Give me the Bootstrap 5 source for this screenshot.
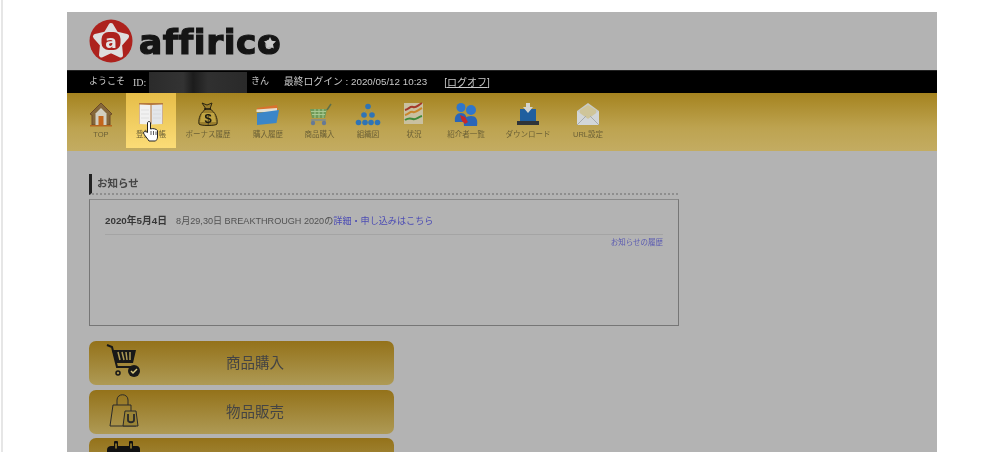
<!DOCTYPE html>
<html lang="ja">
<head>
<meta charset="utf-8">
<title>affirico</title>
<link href="https://cdn.jsdelivr.net/npm/bootstrap@5.3.0/dist/css/bootstrap.min.css" rel="stylesheet">
<style>
html,body{height:452px;overflow:hidden;background:#fff}
body{font-family:"Liberation Sans","Noto Sans CJK JP",sans-serif;border-left:2px solid #e6e6e6;margin-left:1px}
.sheet{width:870px;height:440px;margin:12px 0 0 64px;background:#b3b3b3;overflow:hidden;filter:blur(.6px)}
.logo-band{height:58px;padding-left:22px;gap:6px}
.logo-word{font-family:"DejaVu Sans",sans-serif;font-weight:700;font-size:34.500px;line-height:1;color:#151515;-webkit-text-stroke:1.2px #151515;letter-spacing:.5px;margin-top:3px;position:relative}
.logo-star{position:absolute;right:5px;top:12px}
.user-bar{height:23px;background:#000;color:#c8c8c8;font-size:9px;padding-left:22px;border-top:1px solid #222}
.greet{margin-right:8px}
.id-tag{font-family:"Liberation Serif",serif;font-size:10px;width:16px}
.mask-id{width:98px;height:21px;margin-right:4px;background:linear-gradient(90deg,#2b2b2b,#333 35%,#1c1c1c 45%,#303030 60%,#2a2a2a)}
.last-login{margin-left:15px;font-size:9.800px}
.user-bar a{color:#c8c8c8;margin-left:17px;font-size:10px}
.menu{height:58px;background:linear-gradient(#a5831f,#bda350 60%,#c3ac62);padding-left:9px;position:relative}
.menu-item{height:55px;color:#6b6036;font-size:7.500px;text-align:center;padding-top:9px;flex:none;white-space:nowrap}
.menu-item svg{display:block;margin:0 auto 1px;width:26px;height:26px}
.menu-item.lit{background:linear-gradient(#e6bd48,#fbdc77)}
.w-a{width:50px}.w-b{width:64px}.w-c{width:56px}.w-d{width:47px}.w-f{width:42px}.w-g{width:62px}.w-h{width:58px}
.menu-hand{position:absolute;left:76px;top:27px}
.pane{padding:23px 0 0 22px}
.head-line{width:589px;height:21px;border-left:3px solid #222;border-bottom:2px dotted #8e8e8e;font-size:10.500px;font-weight:700;color:#444;padding-left:5px;line-height:18px;box-sizing:border-box}
.news-box{width:590px;height:127px;margin-top:4px;border:1px solid #767676;border-top-color:#8a8a8a;padding:13px 15px 0 15px}
.news-row{height:22px;border-bottom:1px solid #a4a4a4;font-size:9.100px;color:#515151;line-height:15px}
.news-row b{color:#383838;margin-right:9px;font-size:9.800px}
.news-row a{color:#4c4cb4;text-decoration:none}
.news-more a{color:#5a5ab2;text-decoration:none}
.news-more{font-size:7.500px;text-align:right;line-height:15px}
.big-btn{width:305px;height:44px;margin-bottom:4.500px;border-radius:7px;background:linear-gradient(#94721a,#ae9a55);color:#444;font-size:14.500px;position:relative;padding:2px 0 0 27px}
.big-btn svg{position:absolute;left:16px;top:3px}
.stack{margin-top:15px}
</style>
</head>
<body>
<div class="sheet">
  <div class="logo-band d-flex align-items-center">
    <svg width="44" height="44" viewBox="0 0 44 44">
      <circle cx="22" cy="22" r="21.500" fill="#ad221d"/>
      <path d="M22 6.500l5 8.500 10.500 2.500-7 8 1 10.500L22 31.500l-9.500 4.500 1-10.500-7-8L17 15z" fill="#dedede" stroke="#dedede" stroke-width="5" stroke-linejoin="round"/>
      <rect x="12.500" y="13" width="19" height="18" rx="7" fill="#ad221d"/>
      <text x="22" y="28.500" text-anchor="middle" font-family="DejaVu Sans" font-weight="700" font-size="17" fill="#e4e4e4">a</text>
    </svg>
    <div class="logo-word">affirico
      <svg class="logo-star" width="12" height="12" viewBox="0 0 12 12"><path d="M6 0l1.800 3.800 4.200.5-3 2.900.8 4.300L6 9.400 2.200 11.500l.8-4.300-3-2.900 4.200-.5z" fill="#c8c8c8"/></svg>
    </div>
  </div>
  <div class="user-bar d-flex align-items-center">
    <span class="greet">ようこそ</span><span class="id-tag">ID:</span><span class="mask-id"></span><span>きん</span>
    <span class="last-login">最終ログイン : 2020/05/12 10:23</span><a href="#">[ログオフ]</a>
  </div>
  <div class="menu d-flex">
    <div class="menu-item w-a">
      <svg viewBox="0 0 26 26"><path d="M13 1 2 12l2 1v10h18V13l2-1z" fill="#85673a" stroke="#6b4a28"/><path d="M7.500 11.500 13 6l5.500 5.500V23h-11z" fill="#d2cfc0"/><path d="M10.500 14h5v9h-5z" fill="#c4661c"/><path d="M2 23h22v1.500H2z" fill="#b5661f"/></svg>TOP
    </div>
    <div class="menu-item w-a lit">
      <svg viewBox="0 0 26 26"><path d="M1 1h24v21H1z" fill="#b5793d"/><path d="M1.500 2.500 12.500 3v19.500L1.500 22z" fill="#f1f1f1"/><path d="M13.500 3l11-.5V22l-11 .5z" fill="#e3e6ea"/><path d="M3 8h8M3 12h8M3 16h8M15 8h8M15 12h8M15 16h8" stroke="#d4d4d4" stroke-width=".6"/></svg>登録台帳
    </div>
    <div class="menu-item w-b">
      <svg viewBox="0 0 26 26"><path d="M7 1l5 2 5-2-2 6c5 3 8 9 7 15-1 2-17 2-18 0-1-6 2-12 7-15z" fill="#9a7e2c" stroke="#2d2610"/><path d="M9 7h7" stroke="#1c1a10" stroke-width="1.500"/><path d="M7 11h12l2 9H5z" fill="#c0a442"/><text x="13" y="20.500" text-anchor="middle" font-family="Liberation Sans" font-weight="700" font-size="13" fill="#1c1a10">$</text></svg>ボーナス履歴
    </div>
    <div class="menu-item w-c">
      <svg viewBox="0 0 26 26"><path d="M2 6l20-3 1 5H2z" fill="#d8722e"/><path d="M1.500 7.500 22 6v4H1.500z" fill="#e6e0d0"/><path d="M2 11l22-3-2.500 13L2 23z" fill="#3c86c8"/></svg>購入履歴
    </div>
    <div class="menu-item w-d">
      <svg viewBox="0 0 26 26"><path d="M3 7h17l-2 9H5z" fill="#6f9a58"/><path d="M4 9.500h15M5 12.500h13M8 7v9M12 7v9M16 7v9" stroke="#a8c890"/><path d="M20 8l4-6" stroke="#5d6f4a" stroke-width="1.500"/><path d="M4 18h15" stroke="#8a8f80" stroke-width="2"/><circle cx="6" cy="21" r="2.200" fill="#667a96"/><circle cx="17" cy="21" r="2.200" fill="#667a96"/></svg>商品購入
    </div>
    <div class="menu-item w-a">
      <svg viewBox="0 0 26 26" fill="#2f74b6"><path d="M13 4 8 12M13 4l5 8" stroke="#9c9868"/><circle cx="13" cy="4.500" r="2.800"/><circle cx="9" cy="13" r="2.800"/><circle cx="17" cy="13" r="2.800"/><circle cx="3.500" cy="20.500" r="2.800"/><circle cx="10" cy="20.500" r="2.800"/><circle cx="16" cy="20.500" r="2.800"/><circle cx="22.500" cy="20.500" r="2.800"/></svg>組織図
    </div>
    <div class="menu-item w-f">
      <svg viewBox="0 0 26 26" fill="none" stroke-width="2"><path d="M3 1h19v21H3z" fill="#c9c0a0" stroke="none"/><path d="M4 8c4-1 5-4 8-3s4-1 9-4" stroke="#a5382a"/><path d="M4 13c4-1 5-4 8-3s5-2 9-4" stroke="#c9862a"/><path d="M4 18c3-2 5-2 8-1s5-2 9-3" stroke="#3f8a3a"/></svg>状況
    </div>
    <div class="menu-item w-g">
      <svg viewBox="0 0 26 26"><circle cx="8" cy="5.500" r="4.500" fill="#2f76cc"/><circle cx="18" cy="8" r="5" fill="#2f76cc"/><path d="M2 20c-1-6 2-9 6-9s6 3 6 9z" fill="#2a66b8"/><path d="M11 24c-1-7 2-10 7-10s7 3 6 10z" fill="#2a66b8"/><path d="M7 13l5 2 3 5-3 2-3-3z" fill="#c8282a"/></svg>紹介者一覧
    </div>
    <div class="menu-item w-g">
      <svg viewBox="0 0 26 26"><path d="M5 7h16v13H5z" fill="#205f9f"/><path d="M2 19h22v4H2z" fill="#2f3439"/><path d="M11 1h4v4h3l-5 6-5-6h3z" fill="#d5d5d0"/></svg>ダウンロード
    </div>
    <div class="menu-item w-h">
      <svg viewBox="0 0 26 26"><path d="M2 9 13 1l11 8v14H2z" fill="#c8cbc8"/><path d="M5 8l8-5 8 5v5l-8 4-8-4z" fill="#cfc59a"/><path d="M2 9l11 8 11-8v14H2z" fill="#d2d6d8"/><path d="M2 23l9-9M24 23l-9-9" stroke="#a6aaac"/></svg>URL設定
    </div>
    <svg class="menu-hand" width="16" height="22" viewBox="0 0 16 22"><path d="M4.500 3c0-2 3-2 3 0v6c2-1 6 0 7 1.500V17c0 2-1 3-2 4H6c-1-2-5-6-5.500-8-.3-1.500 2-2 4-.5z" fill="#fff" stroke="#222"/><path d="M8 11v4M10.500 11v4M13 11.500V15" stroke="#333" stroke-width=".8"/></svg>
  </div>
  <div class="pane">
    <div class="head-line">お知らせ</div>
    <div class="news-box">
      <div class="news-row"><b>2020年5月4日</b>8月29,30日 BREAKTHROUGH 2020の<a href="#">詳細・申し込みはこちら</a></div>
      <div class="news-more"><a href="#">お知らせの履歴</a></div>
    </div>
    <div class="stack">
      <div class="big-btn d-flex align-items-center justify-content-center">
        <svg width="36" height="34" viewBox="0 0 36 34" fill="none"><path d="M2 1l5 2 5 20h15" stroke="#181818" stroke-width="2"/><path d="M7 6h24l-3 13H11z" fill="#181818"/><path d="M13 8l2 8M17 8l2 8M21 8l1 8M25 8v8" stroke="#ae9a55" stroke-width="1.500"/><circle cx="13" cy="29" r="2" stroke="#181818" stroke-width="1.500"/><circle cx="29" cy="27" r="6" fill="#181818"/><path d="M26 27l2 2 4-4" stroke="#d8c880" stroke-width="1.500"/></svg>
        商品購入
      </div>
      <div class="big-btn d-flex align-items-center justify-content-center">
        <svg width="36" height="34" viewBox="0 0 36 34" fill="none" stroke="#2a2a2a" stroke-width="1"><path d="M8 12 5 33h26M8 12h18v6M12 12V7c0-7 11-7 11 0v5"/><path d="M20 18h11l2 15H18z" fill="#9a8436"/><path d="M23 21v6c0 3 6 3 6 0v-6" stroke-width="1.800"/></svg>
        物品販売
      </div>
      <div class="big-btn d-flex align-items-center justify-content-center">
        <svg width="36" height="34" viewBox="0 0 36 34"><path d="M2 9c0-3 2-4 4-4h26c2 0 3 1 3 4v22H2z" fill="#111"/><path d="M11 1.500v7M26 1.500v7" stroke="#111" stroke-width="4" stroke-linecap="round"/><path d="M11 3v4M26 3v4" stroke="#a08530" stroke-width="1.500" stroke-linecap="round"/></svg>
      </div>
    </div>
  </div>
</div>
<script src="https://cdn.jsdelivr.net/npm/bootstrap@5.3.0/dist/js/bootstrap.bundle.min.js"></script>
</body>
</html>
